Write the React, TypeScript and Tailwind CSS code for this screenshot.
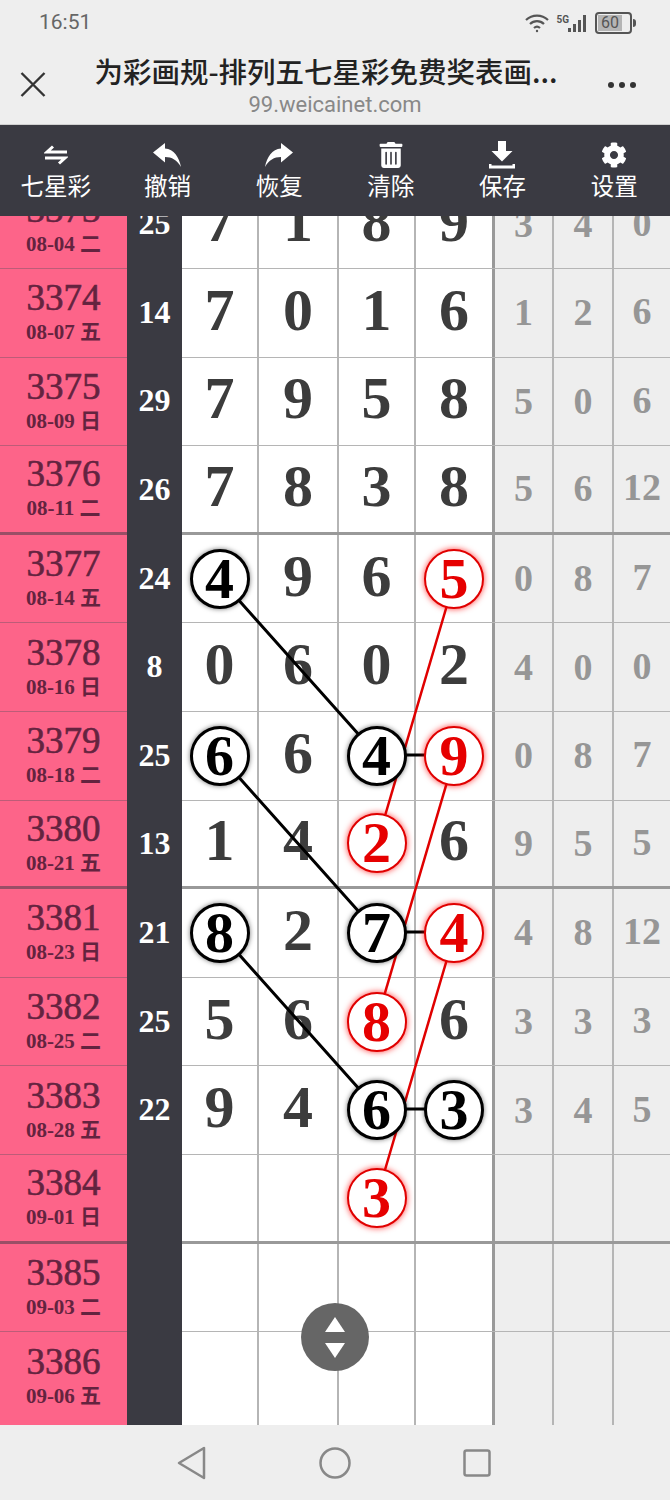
import React from "react";
import { FaCog, FaTrashAlt } from "react-icons/fa";

type Mark = "b" | "r" | "";

interface Row {
  issue: string;
  date: string;
  sum?: string;
  main: string[];
  marks?: Mark[];
  rest: string[];
}

const rows: Row[] = [
  { issue: "3373", date: "08-04 二", sum: "25", main: ["7", "1", "8", "9"], rest: ["3", "4", "0"] },
  { issue: "3374", date: "08-07 五", sum: "14", main: ["7", "0", "1", "6"], rest: ["1", "2", "6"] },
  { issue: "3375", date: "08-09 日", sum: "29", main: ["7", "9", "5", "8"], rest: ["5", "0", "6"] },
  { issue: "3376", date: "08-11 二", sum: "26", main: ["7", "8", "3", "8"], rest: ["5", "6", "12"] },
  { issue: "3377", date: "08-14 五", sum: "24", main: ["4", "9", "6", "5"], marks: ["b", "", "", "r"], rest: ["0", "8", "7"] },
  { issue: "3378", date: "08-16 日", sum: "8", main: ["0", "6", "0", "2"], rest: ["4", "0", "0"] },
  { issue: "3379", date: "08-18 二", sum: "25", main: ["6", "6", "4", "9"], marks: ["b", "", "b", "r"], rest: ["0", "8", "7"] },
  { issue: "3380", date: "08-21 五", sum: "13", main: ["1", "4", "2", "6"], marks: ["", "", "r", ""], rest: ["9", "5", "5"] },
  { issue: "3381", date: "08-23 日", sum: "21", main: ["8", "2", "7", "4"], marks: ["b", "", "b", "r"], rest: ["4", "8", "12"] },
  { issue: "3382", date: "08-25 二", sum: "25", main: ["5", "6", "8", "6"], marks: ["", "", "r", ""], rest: ["3", "3", "3"] },
  { issue: "3383", date: "08-28 五", sum: "22", main: ["9", "4", "6", "3"], marks: ["", "", "b", "b"], rest: ["3", "4", "5"] },
  { issue: "3384", date: "09-01 日", main: ["", "", "3", ""], marks: ["", "", "r", ""], rest: ["", "", ""] },
  { issue: "3385", date: "09-03 二", main: ["", "", "", ""], rest: ["", "", ""] },
  { issue: "3386", date: "09-06 五", main: ["", "", "", ""], rest: ["", "", ""] },
];

const mainWidths = ["w-[77px]", "w-[80px]", "w-[77px]", "w-[76px]"];
const restWidths = ["w-[59px]", "w-[60px]", "flex-1"];

const ExchangeIcon = () => (
  <svg width="24" height="20" viewBox="0 0 24 20" fill="none" stroke="#fff" strokeWidth="3">
    <path d="M23 7H3l6-5.500" />
    <path d="M1 13h20l-6 5.500" />
  </svg>
);

const ReplyIcon = ({ flip }: { flip?: boolean }) => (
  <svg width="28" height="24" viewBox="0 0 28 24" fill="#fff" className={flip ? "-scale-x-100" : ""}>
    <path d="M0 9.500 12 0v5.500C21 6 26 14 28 24 24 17 19 14 12 14v5.500z" />
  </svg>
);

const DownloadIcon = () => (
  <svg width="28" height="30" viewBox="0 0 28 30" fill="#fff">
    <path d="M10 1h8v10h6.500L14 21.500 3.500 11H10z" />
    <path d="M1 24v4.500h26V24h-2.500v1.500h-21V24z" />
  </svg>
);

const tools = [
  { label: "七星彩", icon: <ExchangeIcon /> },
  { label: "撤销", icon: <ReplyIcon /> },
  { label: "恢复", icon: <ReplyIcon flip /> },
  { label: "清除", icon: <FaTrashAlt size={26} color="#fff" /> },
  { label: "保存", icon: <DownloadIcon /> },
  { label: "设置", icon: <FaCog size={26} color="#fff" /> },
];

const Digit = ({ value, mark }: { value: string; mark: Mark }) => {
  if (mark === "b") {
    return (
      <span className="relative z-20 flex size-[60px] items-center justify-center rounded-full border-[3px] border-black bg-white text-[58px] leading-none text-black shadow-[0_0_5px_rgba(0,0,0,0.55)]">
        {value}
      </span>
    );
  }
  if (mark === "r") {
    return (
      <span className="relative z-20 flex size-[60px] items-center justify-center rounded-full border-[2.5px] border-[#e00000] bg-white text-[58px] leading-none text-[#e60000] shadow-[0_0_6px_rgba(255,0,0,0.75)]">
        {value}
      </span>
    );
  }
  return <span className="pb-[6px]">{value}</span>;
};

const TrendLines = () => (
  <svg className="absolute inset-0 z-10" width="670" height="1209" viewBox="0 216 670 1209" fill="none">
    <g stroke="#000" strokeWidth="3">
      <path d="M219 578 377 755H455" />
      <path d="M219 755 377 932H455" />
      <path d="M219 932 377 1109H455" />
    </g>
    <g stroke="#e00000" strokeWidth="2.5">
      <path d="M455 578 377 843" />
      <path d="M455 755 377 1020" />
      <path d="M455 932 377 1197" />
    </g>
  </svg>
);

const TableRow = ({ row, line }: { row: Row; line: "thick" | "thin" | "none" }) => (
  <div className="flex h-[88.6px] font-['Liberation_Serif','Noto_Sans_CJK_SC',serif] font-bold">
    <div
      className={`flex w-[127px] shrink-0 flex-col items-center justify-center bg-[#fd6489] text-[#64233f] ${
        line === "thick" ? "border-b-[3px] border-[#9a4e66]" : line === "thin" ? "border-b border-[#bd5c78]" : ""
      }`}
    >
      <div className="text-[37px] leading-[36px] font-normal [-webkit-text-stroke:0.6px_#64233f]">{row.issue}</div>
      <div className="mt-[3px] text-[21px] leading-[26px]">{row.date}</div>
    </div>
    <div className="flex w-[55px] shrink-0 items-center justify-center bg-[#3a3a42] pb-[3px] text-[32px] text-white">
      {row.sum}
    </div>
    <div
      className={`flex flex-1 ${
        line === "thick" ? "border-b-[3px] border-[#999]" : line === "thin" ? "border-b border-[#b5b5b5]" : ""
      }`}
    >
      <div className="flex w-[310px] shrink-0 bg-white text-[60px] text-[#3c3c3c]">
        {row.main.map((value, i) => (
          <div
            key={i}
            className={`flex items-center justify-center ${mainWidths[i]} ${i < 3 ? "border-r-2 border-[#b5b5b5]" : ""}`}
          >
            <Digit value={value} mark={row.marks?.[i] ?? ""} />
          </div>
        ))}
      </div>
      <div className="flex flex-1 border-l-[3px] border-[#999] bg-[#eeeeee] pb-[2px] text-[38px] text-[#969696]">
        {row.rest.map((value, i) => (
          <div
            key={i}
            className={`flex items-center justify-center ${restWidths[i]} ${i < 2 ? "-mb-[2px] border-r-2 border-[#b5b5b5]" : ""}`}
          >
            {value}
          </div>
        ))}
      </div>
    </div>
  </div>
);

const StatusIcons = () => (
  <div className="flex items-center gap-[6px] text-[#555]">
    <svg width="26" height="20" viewBox="0 0 26 20" fill="none" stroke="#555" strokeWidth="2.2">
      <path d="M2 7a16 16 0 0 1 22 0" />
      <path d="M6 11a10 10 0 0 1 14 0" />
      <path d="M10 15a4.500 4.500 0 0 1 6 0" />
      <circle cx="13" cy="18" r="1.200" fill="#555" stroke="none" />
    </svg>
    <div className="flex items-end">
      <span className="mb-[8px] font-['Roboto',sans-serif] text-[10px] leading-none font-bold">5G</span>
      <svg width="24" height="20" viewBox="0 0 24 20" fill="#555" className="-ml-[4px]">
        <rect x="3" y="15" width="3" height="4" />
        <rect x="8" y="11" width="3" height="8" />
        <rect x="13" y="7" width="3" height="12" />
        <rect x="18" y="2" width="3" height="17" />
      </svg>
    </div>
    <div className="flex items-center">
      <div className="flex h-[22px] w-[37px] items-center rounded-[4px] border-2 border-[#555] p-[1px]">
        <div className="flex h-full w-[24px] items-center justify-center bg-[#b5b5b5] font-['Roboto',sans-serif] text-[16px] leading-none">
          60
        </div>
      </div>
      <div className="ml-[1px] h-[8px] w-[3px] rounded-r-sm bg-[#555]" />
    </div>
  </div>
);

export default function App() {
  return (
    <div className="flex h-[1500px] w-[670px] flex-col overflow-hidden bg-[#eeeeee]">
      <div className="flex h-[46px] shrink-0 items-center justify-between pr-[34px] pl-[39px]">
        <span className="font-['Roboto',sans-serif] text-[21px] text-[#666]">16:51</span>
        <StatusIcons />
      </div>

      <div className="flex h-[78px] shrink-0 items-start">
        <div className="flex h-[62px] w-[66px] shrink-0 items-center justify-center pt-[14px] pr-[1px]">
          <svg width="26" height="26" viewBox="0 0 26 26" stroke="#333" strokeWidth="2.4">
            <path d="M1.500 2 24.500 25M24.500 2 1.500 25" />
          </svg>
        </div>
        <div className="flex flex-1 flex-col items-center pt-[4px]">
          <div className="mr-[18px] font-['Noto_Sans_CJK_SC',sans-serif] text-[28.5px] leading-[42px] font-medium whitespace-nowrap text-[#222]">
            为彩画规-排列五七星彩免费奖表画...
          </div>
          <div className="font-['Roboto',sans-serif] text-[22px] leading-[26px] text-[#888]">99.weicainet.com</div>
        </div>
        <div className="flex h-[76px] w-[66px] shrink-0 items-center justify-start gap-[5px] pt-[1px] pl-[4px]">
          <span className="size-[6px] rounded-full bg-[#333]" />
          <span className="size-[6px] rounded-full bg-[#333]" />
          <span className="size-[6px] rounded-full bg-[#333]" />
        </div>
      </div>

      <div className="grid h-[92px] shrink-0 grid-cols-6 border-t border-[#d0d0d0] bg-[#3a3a42]">
        {tools.map((tool) => (
          <div key={tool.label} className="flex flex-col items-center pt-[13px]">
            <div className="flex h-[34px] items-center justify-center">{tool.icon}</div>
            <div className="font-['Noto_Sans_CJK_SC',sans-serif] text-[23.5px] leading-[26px] text-white">
              {tool.label}
            </div>
          </div>
        ))}
      </div>

      <div className="relative flex-1 overflow-hidden">
        <div className="-mt-[35.6px]">
          {rows.map((row, i) => (
            <TableRow
              key={row.issue}
              row={row}
              line={i === rows.length - 1 ? "none" : i % 4 === 3 ? "thick" : "thin"}
            />
          ))}
          {/* next row, only its first few pixels are above the nav bar */}
          <TableRow row={{ issue: "", date: "", main: ["", "", "", ""], rest: ["", "", ""] }} line="none" />
        </div>
        <TrendLines />
        <div className="absolute top-[1087px] left-[301px] z-30 flex size-[68px] flex-col items-center justify-center gap-[11px] rounded-full bg-[#666]">
          <svg width="20" height="15" viewBox="0 0 20 15" fill="#fff">
            <path d="M10 0 20 15H0z" />
          </svg>
          <svg width="20" height="15" viewBox="0 0 20 15" fill="#fff">
            <path d="M10 15 20 0H0z" />
          </svg>
        </div>
      </div>

      <div className="flex h-[75px] shrink-0 items-center justify-center gap-[112px] pr-[2px]">
        <svg width="30" height="34" viewBox="0 0 30 34" fill="none" stroke="#888" strokeWidth="2.5" strokeLinejoin="round">
          <path d="M27 2v30L2 17z" />
        </svg>
        <svg width="32" height="32" viewBox="0 0 32 32" fill="none" stroke="#888" strokeWidth="2.5">
          <circle cx="16" cy="16" r="14.500" />
        </svg>
        <svg width="28" height="28" viewBox="0 0 28 28" fill="none" stroke="#888" strokeWidth="2.5">
          <rect x="1.500" y="1.500" width="25" height="25" rx="2" />
        </svg>
      </div>
    </div>
  );
}
